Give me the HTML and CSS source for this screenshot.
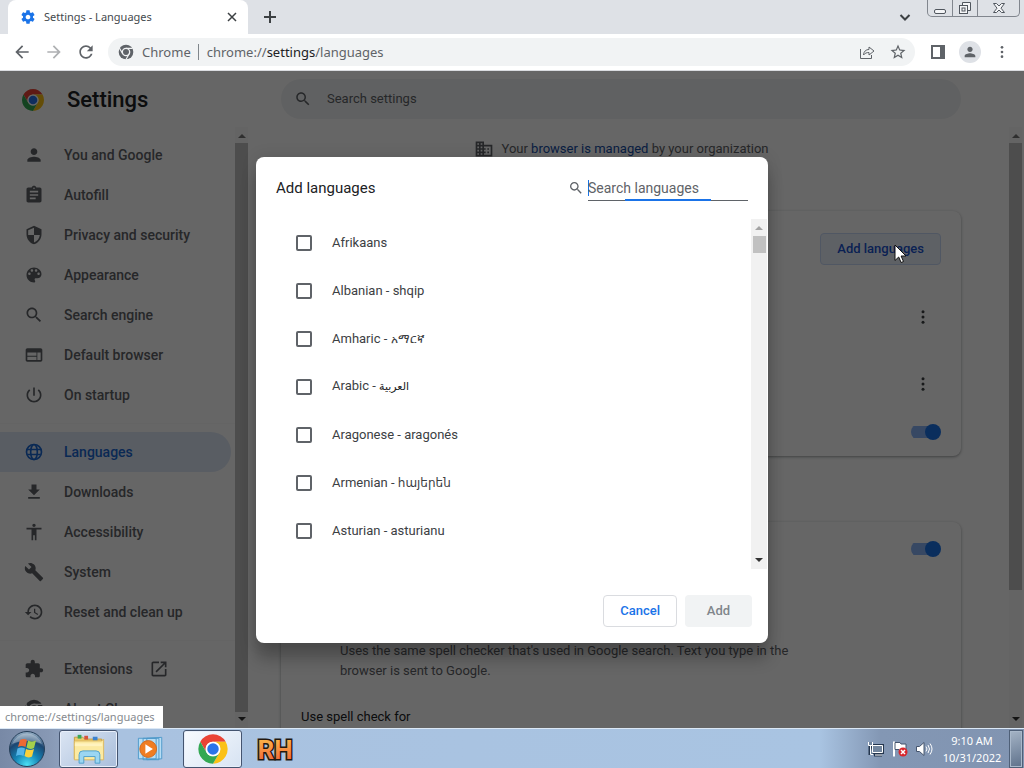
FILE: index.html
```html
<!DOCTYPE html>
<html lang="en">
<head>
<meta charset="utf-8">
<title>Settings - Languages</title>
<link rel="stylesheet" href="styles.css">
</head>
<body>
<svg class="defs" aria-hidden="true">
  <symbol id="chrome-logo" viewBox="0 0 48 48">
    <path fill="#ea4335" d="M4.95 13A22 22 0 0 1 43.05 13H24A11 11 0 0 0 14.47 29.5Z"/>
    <path fill="#fbc116" d="M43.05 13A22 22 0 0 1 24 46L33.53 29.5A11 11 0 0 0 24 13Z"/>
    <path fill="#34a853" d="M24 46A22 22 0 0 1 4.95 13L14.47 29.5A11 11 0 0 0 33.53 29.5Z"/>
    <circle cx="24" cy="24" r="11" fill="#fff"/><circle cx="24" cy="24" r="8.6" fill="#2a74ea"/>
  </symbol>
  <symbol id="search" viewBox="0 0 24 24"><path d="M15.5 14h-.79l-.28-.27C15.41 12.59 16 11.11 16 9.5 16 5.91 13.09 3 9.5 3S3 5.91 3 9.5 5.91 16 9.5 16c1.61 0 3.09-.59 4.23-1.57l.27.28v.79l5 4.99L20.49 19l-4.99-5zm-6 0C7.01 14 5 11.99 5 9.5S7.01 5 9.5 5 14 7.01 14 9.5 11.99 14 9.5 14z"/></symbol>
  <symbol id="person" viewBox="0 0 24 24"><path d="M12 12c2.21 0 4-1.79 4-4s-1.79-4-4-4-4 1.79-4 4 1.79 4 4 4zm0 2c-2.67 0-8 1.34-8 4v2h16v-2c0-2.66-5.33-4-8-4z"/></symbol>
  <symbol id="dots" viewBox="0 0 24 24"><circle cx="12" cy="5" r="2"/><circle cx="12" cy="12" r="2"/><circle cx="12" cy="19" r="2"/></symbol>
  <symbol id="up" viewBox="0 0 8 8"><path d="M0 6l4-4 4 4z"/></symbol>
  <symbol id="down" viewBox="0 0 8 8"><path d="M0 2l4 4 4-4z"/></symbol>
</svg>

<header class="tabstrip">
  <div class="tab">
    <svg class="i16 blue" viewBox="0 0 24 24"><path d="M19.43 12.98c.04-.32.07-.64.07-.98s-.03-.66-.07-.98l2.11-1.65c.19-.15.24-.42.12-.64l-2-3.46c-.12-.22-.39-.3-.61-.22l-2.49 1c-.52-.4-1.08-.73-1.69-.98l-.38-2.65C14.46 2.18 14.25 2 14 2h-4c-.25 0-.46.18-.49.42l-.38 2.65c-.61.25-1.17.59-1.69.98l-2.49-1c-.23-.09-.49 0-.61.22l-2 3.46c-.13.22-.07.49.12.64l2.11 1.65c-.04.32-.07.65-.07.98s.03.66.07.98l-2.11 1.65c-.19.15-.24.42-.12.64l2 3.46c.12.22.39.3.61.22l2.49-1c.52.4 1.08.73 1.69.98l.38 2.65c.03.24.24.42.49.42h4c.25 0 .46-.18.49-.42l.38-2.65c.61-.25 1.17-.59 1.69-.98l2.49 1c.23.09.49 0 .61-.22l2-3.46c.12-.22.07-.49-.12-.64l-2.11-1.65zM12 15.5c-1.93 0-3.5-1.57-3.5-3.5s1.57-3.5 3.5-3.5 3.5 1.57 3.5 3.5-1.57 3.5-3.5 3.5z"/></svg>
    <span class="tab-title">Settings - Languages</span>
    <button class="bare" aria-label="Close tab"><svg class="i10 line" viewBox="0 0 10 10"><path d="M1 1l8 8M9 1l-8 8"/></svg></button>
  </div>
  <button class="bare new-tab" aria-label="New tab"><svg class="i12 line" viewBox="0 0 12 12"><path d="M6 0v12M0 6h12"/></svg></button>
  <button class="bare tab-search" aria-label="Search tabs"><svg class="i12 line" viewBox="0 0 12 12"><path d="M1.500 4l4.500 4.500L10.500 4"/></svg></button>
  <div class="window-buttons">
    <button aria-label="Minimize"><svg viewBox="0 0 14 14"><rect x="1.500" y="8.500" width="11" height="4" rx="1.500"/></svg></button>
    <button aria-label="Restore"><svg viewBox="0 0 14 14"><path d="M4.500 4V1.500h8v8H10"/><rect x="1.500" y="4.500" width="8" height="8"/><rect x="4" y="7" width="3" height="3"/></svg></button>
    <button class="wide" aria-label="Close"><svg viewBox="0 0 14 14"><path d="M1.500 2.500h3L7 5l2.500-2.500h3L9 7.200l3.500 4.300h-3L7 9l-2.500 2.500h-3L5 7.200z"/></svg></button>
  </div>
</header>

<nav class="toolbar">
  <button class="bare" aria-label="Back"><svg class="i20" viewBox="0 0 24 24"><path d="M20 11H7.830l5.590-5.590L12 4l-8 8 8 8 1.410-1.410L7.830 13H20v-2z"/></svg></button>
  <button class="bare faded" aria-label="Forward"><svg class="i20" viewBox="0 0 24 24"><path d="M4 13h12.170l-5.590 5.590L12 20l8-8-8-8-1.410 1.410L16.170 11H4v2z"/></svg></button>
  <button class="bare" aria-label="Reload"><svg class="i20" viewBox="0 0 24 24"><path d="M17.650 6.350C16.200 4.900 14.210 4 12 4c-4.420 0-7.990 3.580-7.990 8s3.570 8 7.990 8c3.730 0 6.840-2.550 7.730-6h-2.080c-.82 2.330-3.040 4-5.650 4-3.310 0-6-2.690-6-6s2.690-6 6-6c1.660 0 3.140.69 4.220 1.780L13 11h7V4l-2.350 2.350z"/></svg></button>
  <div class="omnibox">
    <svg class="i16" viewBox="0 0 48 48"><circle cx="24" cy="24" r="22"/><circle cx="24" cy="24" r="11" fill="none" stroke="#f1f3f4" stroke-width="4"/><path fill="none" stroke="#f1f3f4" stroke-width="3.500" d="M24 13H44M14.470 29.500L4 12M33.530 29.500L23.500 47"/></svg>
    <span class="origin">Chrome</span>
    <span class="url">chrome://<b>settings</b>/languages</span>
    <button class="bare" aria-label="Share"><svg class="i16 outline" viewBox="0 0 16 16"><path d="M1.500 5v9.500h11V11M4.500 11c.3-3.800 2.500-5.500 5.500-5.500V3l5 4-5 4V8.500c-2.500 0-4 .7-5.500 2.500z"/></svg></button>
    <button class="bare" aria-label="Bookmark this tab"><svg class="i18" viewBox="0 0 24 24"><path d="M22 9.240l-7.190-.62L12 2 9.190 8.630 2 9.240l5.460 4.730L5.820 21 12 17.270 18.180 21l-1.630-7.030L22 9.240zM12 15.400l-3.760 2.270 1-4.280-3.320-2.880 4.380-.38L12 6.100l1.710 4.040 4.380.38-3.320 2.880 1 4.280L12 15.400z"/></svg></button>
  </div>
  <button class="bare side-panel" aria-label="Side panel"><svg class="i16" viewBox="0 0 16 16"><path fill-rule="evenodd" d="M1 1h14v14H1zM3 3v10h7V3z"/></svg></button>
  <button class="bare avatar" aria-label="Profile"><svg class="i16"><use href="#person"/></svg></button>
  <button class="bare" aria-label="Menu"><svg class="i16"><use href="#dots"/></svg></button>
</nav>

<div class="page">
  <div class="page-head">
    <div class="brand"><svg class="i24"><use href="#chrome-logo"/></svg><h1>Settings</h1></div>
    <div class="head-main">
      <label class="search-box"><svg class="i18"><use href="#search"/></svg><input type="text" placeholder="Search settings" aria-label="Search settings"></label>
    </div>
  </div>
  <div class="page-body">
    <aside class="sidebar">
      <nav class="menu">
        <a href="#"><svg><use href="#person"/></svg>You and Google</a>
        <a href="#"><svg viewBox="0 0 24 24"><path d="M19 3h-4.180C14.400 1.840 13.300 1 12 1c-1.300 0-2.400.84-2.820 2H5c-1.100 0-2 .9-2 2v14c0 1.100.9 2 2 2h14c1.100 0 2-.9 2-2V5c0-1.100-.9-2-2-2zm-7 0c.55 0 1 .45 1 1s-.45 1-1 1-1-.45-1-1 .45-1 1-1zm2 14H7v-2h7v2zm3-4H7v-2h10v2zm0-4H7V7h10v2z"/></svg>Autofill</a>
        <a href="#"><svg viewBox="0 0 24 24"><path d="M12 1L3 5v6c0 5.550 3.840 10.740 9 12 5.160-1.260 9-6.450 9-12V5l-9-4zm0 10.990h7c-.53 4.120-3.280 7.790-7 8.940V12H5V6.300l7-3.110v8.800z"/></svg>Privacy and security</a>
        <a href="#"><svg viewBox="0 0 24 24"><path d="M12 3c-4.970 0-9 4.030-9 9s4.030 9 9 9c.83 0 1.500-.67 1.500-1.500 0-.39-.15-.74-.39-1.010-.23-.26-.38-.61-.38-.99 0-.83.67-1.500 1.500-1.500H16c2.760 0 5-2.240 5-5 0-4.420-4.030-8-9-8zm-5.500 9c-.83 0-1.500-.67-1.500-1.500S5.670 9 6.500 9 8 9.670 8 10.500 7.330 12 6.500 12zm3-4C8.670 8 8 7.330 8 6.500S8.670 5 9.500 5s1.500.67 1.500 1.500S10.330 8 9.500 8zm5 0c-.83 0-1.500-.67-1.500-1.500S13.670 5 14.500 5s1.500.67 1.500 1.500S15.330 8 14.500 8zm3 4c-.83 0-1.500-.67-1.500-1.500S16.670 9 17.500 9s1.500.67 1.500 1.500-.67 1.500-1.500 1.500z"/></svg>Appearance</a>
        <a href="#"><svg><use href="#search"/></svg>Search engine</a>
        <a href="#"><svg viewBox="0 0 24 24"><path d="M20 4H4c-1.100 0-1.990.9-1.990 2L2 18c0 1.100.9 2 2 2h16c1.100 0 2-.9 2-2V6c0-1.100-.9-2-2-2zm-5 14H4v-4h11v4zm0-5H4V9h11v4zm5 5h-4V9h4v9z"/></svg>Default browser</a>
        <a href="#"><svg viewBox="0 0 24 24"><path d="M13 3h-2v10h2V3zm4.830 2.170l-1.420 1.420C17.990 7.860 19 9.810 19 12c0 3.870-3.130 7-7 7s-7-3.130-7-7c0-2.190 1.010-4.140 2.580-5.420L6.170 5.170C4.230 6.820 3 9.260 3 12c0 4.970 4.030 9 9 9s9-4.030 9-9c0-2.740-1.230-5.180-3.170-6.830z"/></svg>On startup</a>
        <hr>
        <a href="#" class="current" aria-current="page"><svg viewBox="0 0 24 24"><g fill="none" stroke="currentColor" stroke-width="2"><circle cx="12" cy="12" r="9"/><ellipse cx="12" cy="12" rx="4" ry="9"/><path d="M4 9h16M4 15h16"/></g></svg>Languages</a>
        <a href="#"><svg viewBox="0 0 24 24"><path d="M19 9h-4V3H9v6H5l7 7 7-7zM5 18v2h14v-2H5z"/></svg>Downloads</a>
        <a href="#"><svg viewBox="0 0 24 24"><path d="M12 2c1.100 0 2 .9 2 2s-.9 2-2 2-2-.9-2-2 .9-2 2-2zm9 7h-6v13h-2v-6h-2v6H9V9H3V7h18v2z"/></svg>Accessibility</a>
        <a href="#"><svg viewBox="0 0 24 24"><path d="M22.700 19l-9.100-9.100c.9-2.300.4-5-1.500-6.900-2-2-5-2.400-7.400-1.300L9 6 6 9 1.600 4.700C.4 7.100.9 10.100 2.900 12.100c1.900 1.900 4.600 2.400 6.900 1.500l9.100 9.100c.4.4 1 .4 1.400 0l2.300-2.300c.5-.4.5-1.100.1-1.400z"/></svg>System</a>
        <a href="#"><svg viewBox="0 0 24 24"><path d="M13 3c-4.970 0-9 4.030-9 9H1l3.890 3.890.07.14L9 12H6c0-3.870 3.130-7 7-7s7 3.130 7 7-3.130 7-7 7c-1.930 0-3.680-.79-4.940-2.060l-1.420 1.420C8.270 19.990 10.510 21 13 21c4.970 0 9-4.030 9-9s-4.030-9-9-9zm-1 5v5l4.280 2.540.72-1.210-3.500-2.080V8H12z"/></svg>Reset and clean up</a>
        <hr>
        <a href="#"><svg viewBox="0 0 24 24"><path d="M20.500 11H19V7c0-1.100-.9-2-2-2h-4V3.500C13 2.120 11.880 1 10.500 1S8 2.120 8 3.500V5H4c-1.100 0-1.990.9-1.990 2v3.800H3.500c1.490 0 2.700 1.210 2.700 2.700s-1.210 2.700-2.700 2.700H2V20c0 1.100.9 2 2 2h3.800v-1.500c0-1.490 1.210-2.700 2.700-2.700 1.490 0 2.700 1.210 2.700 2.700V22H17c1.100 0 2-.9 2-2v-4h1.500c1.380 0 2.500-1.120 2.500-2.500S21.880 11 20.500 11z"/></svg>Extensions<svg viewBox="0 0 24 24"><path d="M19 19H5V5h7V3H5c-1.110 0-2 .9-2 2v14c0 1.100.89 2 2 2h14c1.100 0 2-.9 2-2v-7h-2v7zM14 3v2h3.590l-9.830 9.830 1.410 1.410L19 6.410V10h2V3h-7z"/></svg></a>
        <a href="#"><svg viewBox="0 0 48 48"><circle cx="24" cy="24" r="22"/><circle cx="24" cy="24" r="11" fill="none" stroke="#fff" stroke-width="4"/><path stroke="#fff" stroke-width="3" d="M24 13H44M14.470 29.500L4 12M33.530 29.500L23.500 47"/></svg>About Chrome</a>
      </nav>
      <div class="scrollbar"><svg><use href="#up"/></svg><i class="thumb full"></i><svg class="dark"><use href="#down"/></svg></div>
    </aside>
    <main class="content">
      <p class="managed"><svg class="i20" viewBox="0 0 24 24"><path d="M12 7V3H2v18h20V7H12zM6 19H4v-2h2v2zm0-4H4v-2h2v2zm0-4H4V9h2v2zm0-4H4V5h2v2zm4 12H8v-2h2v2zm0-4H8v-2h2v2zm0-4H8V9h2v2zm0-4H8V5h2v2zm10 12h-8v-2h2v-2h-2v-2h2v-2h-2V9h8v10zm-2-8h-2v2h2v-2zm0 4h-2v2h2v-2z"/></svg><span>Your <a href="#">browser is managed</a> by your organization</span></p>
      <section class="card" aria-label="Preferred languages">
        <div class="row row-add"><button class="outlined">Add languages</button></div>
        <div class="row row-lang"><button class="bare" aria-label="More actions"><svg class="i18"><use href="#dots"/></svg></button></div>
        <div class="row row-lang"><button class="bare" aria-label="More actions"><svg class="i18"><use href="#dots"/></svg></button></div>
        <div class="row row-last"><input class="toggle" type="checkbox" checked aria-label="Offer to translate pages"></div>
      </section>
      <section class="card spell" aria-label="Spell check">
        <div class="row row-spell"><input class="toggle" type="checkbox" checked aria-label="Check for spelling errors"></div>
        <p class="note">Uses the same spell checker that's used in Google search. Text you type in the browser is sent to Google.</p>
        <h2>Use spell check for</h2>
      </section>
    </main>
    <div class="scrollbar edge"><svg><use href="#up"/></svg><i class="thumb"></i><svg class="dark"><use href="#down"/></svg></div>
  </div>

  <div class="scrim">
    <div class="dialog" role="dialog" aria-labelledby="dialog-title">
      <div class="dialog-head">
        <h2 id="dialog-title">Add languages</h2>
        <svg class="i16"><use href="#search"/></svg>
        <input type="text" placeholder="Search languages" aria-label="Search languages">
      </div>
      <div class="dialog-body">
        <div class="list">
          <label><input type="checkbox">Afrikaans</label>
          <label><input type="checkbox">Albanian - shqip</label>
          <label><input type="checkbox"><span>Amharic - <span class="ethiopic">አማርኛ</span></span></label>
          <label><input type="checkbox"><span>Arabic - <span class="arabic">العربية</span></span></label>
          <label><input type="checkbox">Aragonese - aragonés</label>
          <label><input type="checkbox"><span>Armenian - <span class="armenian">հայերեն</span></span></label>
          <label><input type="checkbox">Asturian - asturianu</label>
        </div>
        <div class="scrollbar light"><svg><use href="#up"/></svg><i class="thumb short"></i><svg class="dark"><use href="#down"/></svg></div>
      </div>
      <div class="dialog-foot"><button class="outlined">Cancel</button><button class="disabled" disabled>Add</button></div>
    </div>
  </div>
  <svg class="cursor" viewBox="0 0 13 20"><path d="M1 1v15.500l3.700-3.500 2.400 5.500 2.400-1-2.400-5.500H12z" fill="#fff" stroke="#111"/></svg>
  <div class="status">chrome://settings/languages</div>
</div>

<footer class="taskbar">
  <button class="bare start" aria-label="Start"><svg viewBox="0 0 38 38">
    <defs><radialGradient id="orb" cx=".5" cy=".95" r=".9"><stop offset="0" stop-color="#4be0f4"/><stop offset=".4" stop-color="#1584b5"/><stop offset=".75" stop-color="#1c4671"/><stop offset="1" stop-color="#8aa5bd"/></radialGradient></defs>
    <circle cx="19" cy="19" r="17.500" fill="url(#orb)" stroke="#263f59"/>
    <path d="M4 14a16 16 0 0 1 30 0c-8-4-22-4-30 0z" fill="#fff" opacity=".3"/>
    <path fill="#ee6934" d="M12 10q4-2 7 0l-1.500 7q-4-2-7.500 0z"/><path fill="#a5cf4c" d="M20 10.500q4 2 8 0L26 18q-4 2-7.500-.5z"/>
    <path fill="#56b5e8" d="M9.500 18.500q4-2 7.500 0L15.500 26q-4-2-7.500 0z"/><path fill="#fbd13b" d="M18 19q4 2 8 0l-2 7.500q-4 2-7.500-.5z"/></svg></button>
  <button class="task" aria-label="File Explorer"><svg viewBox="0 0 36 32">
    <path fill="#eccb6c" stroke="#c49b43" d="M2.500 3.500h9l2 2h18v21h-29z"/><path fill="#3aa757" d="M6 1h4v4H6z"/><path fill="#d6533c" d="M13 2h4v4h-4z"/><path fill="#3b82d0" d="M22 3h5v4h-5z"/>
    <path fill="#fbeaa2" stroke="#dcb85e" d="M2.500 7.500h29l2-2v22h-31z"/><path fill="#fff3bf" d="M3 10h29v3H3z"/><path fill="#9bd6f2" stroke="#4c9ecb" d="M7.500 31v-9q0-4 4-4h14q4 0 4 4v9h-5v-7h-12v7z"/></svg></button>
  <button class="task plain" aria-label="Media Player"><svg viewBox="0 0 30 28">
    <path fill="#b7ddf4" stroke="#4c98c9" d="M10.500 2.500l16-1v23l-16 1zM6.500 2.500h17v23h-17zM1.500 2.500h19v22h-19z"/><circle cx="12" cy="14" r="9" fill="#f07d22" stroke="#cf6a20"/><path d="M9 9l8 5-8 5z" fill="#fff"/></svg></button>
  <button class="task active" aria-label="Google Chrome"><svg><use href="#chrome-logo"/></svg></button>
  <button class="task plain" aria-label="RH"><svg class="rh" viewBox="0 0 42 32">
    <defs><linearGradient id="flame" x2="0" y2="1"><stop offset="0" stop-color="#ffc24a"/><stop offset="1" stop-color="#ee5a38"/></linearGradient></defs>
    <text x="21" y="26" text-anchor="middle">RH</text></svg></button>
  <div class="tray">
    <svg viewBox="0 0 18 18"><g fill="none" stroke="#24364e" stroke-width="3"><path d="M5.500 5.500h10v7h-10zM7 15h8M3 2v13"/></g><g fill="#72869e" stroke="#fff"><path d="M5.500 5.500h10v7h-10zM8 15h7M3.500 6v8.500H6M1.500 2v3.500h4V2"/></g></svg>
    <svg viewBox="0 0 18 18"><path d="M3 1.500v15" stroke="#fff" stroke-width="2"/><path d="M4 2.500h5l1 1.500h5v7H9L8 9.500H4z" fill="#fff" stroke="#44546d"/><circle cx="12" cy="12" r="4.500" fill="#d8272d"/><path d="M10 10l4 4M14 10l-4 4" stroke="#fff" stroke-width="1.500"/></svg>
    <svg viewBox="0 0 18 18"><path d="M1.500 6.500h3L9 2.500v13l-4.500-4h-3z" fill="#fff" stroke="#44546d"/><path d="M11 6.500q2 2.500 0 5M13 5q3 4 0 8M15 3.500q4 5.500 0 11" fill="none" stroke="#fff"/></svg>
  </div>
  <div class="clock"><time>9:10 AM</time><time>10/31/2022</time></div>
  <button class="bare show-desktop" aria-label="Show desktop"></button>
</footer>
</body>
</html>
```
FILE: styles.css
```css
* { box-sizing: border-box; }
body { margin: 0; height: 100vh; display: flex; flex-direction: column; overflow: hidden; font: 13px/20px Roboto, sans-serif; color: #202124; background: #fff; }
h1, h2, p { margin: 0; font-weight: 400; }
svg { flex: none; fill: currentColor; display: block; }
button, input { font: inherit; }
.defs { position: absolute; width: 0; height: 0; }
.bare { border: 0; background: none; padding: 0; color: inherit; display: flex; align-items: center; justify-content: center; }
.i10 { width: 10px; height: 10px; }
.i12 { width: 12px; height: 12px; }
.i16 { width: 16px; height: 16px; }
.i18 { width: 18px; height: 18px; }
.i20 { width: 20px; height: 20px; }
.i24 { width: 24px; height: 24px; }
.line { fill: none; stroke: #3c4043; stroke-width: 2; }
.tab .line { stroke-width: 1.5; }
.outline { fill: none; stroke: currentColor; }
.blue { color: #1a73e8; }

/* Browser frame */
.tabstrip { height: 34px; flex: none; display: flex; align-items: center; background: #dee1e6; }
.tab { width: 240px; height: 34px; margin-left: 8px; padding: 0 11px 0 12px; display: flex; align-items: center; gap: 8px; background: #fff; border-radius: 8px 8px 0 0; font: 11px/16px "Noto Sans", sans-serif; color: #45494d; }
.tab-title { flex: 1; }
.new-tab { margin-left: 16px; }
.tab-search { margin-left: auto; }
.window-buttons { display: flex; align-self: flex-start; height: 17px; margin: 0 4px 0 16px; border: 1px solid #81868e; border-top: 0; border-radius: 0 0 5px 5px; }
.window-buttons button { width: 25px; padding: 0; border: 0; border-right: 1px solid #81868e; background: none; display: flex; align-items: center; justify-content: center; }
.window-buttons .wide { width: 41px; border-right: 0; }
.window-buttons svg { width: 14px; height: 14px; fill: #f4f5f7; stroke: #50565e; }
.toolbar { height: 37px; flex: none; display: flex; align-items: center; gap: 12px; padding: 0 14px 0 12px; border-bottom: 1px solid #dadce0; color: #5f6368; font: 13px/20px "Noto Sans", sans-serif; }
.faded { opacity: .5; }
.omnibox { flex: 1; height: 28px; border-radius: 14px; background: #f1f3f4; display: flex; align-items: center; padding: 0 8px 0 10px; gap: 14px; }
.origin { padding-right: 7px; border-right: 1px solid #80868b; margin: 0 -6px; line-height: 16px; }
.url { flex: 1; }
.url b { font-weight: 400; color: #202124; }
.side-panel { margin-left: 3px; }
.avatar { width: 22px; height: 22px; border-radius: 50%; background: #dee1e6; margin: 0 1px; }

/* Settings page */
.page { flex: 1; min-height: 0; position: relative; overflow: hidden; display: flex; flex-direction: column; }
.page-head { height: 56px; flex: none; display: flex; align-items: center; }
.brand { width: 248px; display: flex; align-items: center; gap: 22px; padding: 2px 0 0 21px; }
.brand h1 { font-size: 22px; line-height: 28px; font-weight: 500; }
.head-main { flex: 1; padding: 0 63px 0 33px; }
.search-box { display: flex; align-items: center; gap: 15px; height: 40px; padding: 0 13px; border-radius: 20px; background: #f1f3f4; color: #5f6368; }
.search-box input { flex: 1; border: 0; background: none; outline: 0; padding: 0; }
input::placeholder { color: #5f6368; opacity: 1; }
.page-body { flex: 1; min-height: 0; display: flex; }
.sidebar { width: 248px; flex: none; display: flex; }
.menu { flex: 1; overflow: hidden; padding-top: 8px; }
.menu a { height: 40px; margin-right: 4px; padding-left: 24px; display: flex; align-items: center; gap: 16px; color: #5f6368; font-weight: 500; font-size: 14px; text-decoration: none; }
.menu svg { width: 20px; height: 20px; }
.menu svg:first-child { margin-right: 4px; }
.menu hr { margin: 8px 0; border: 0; height: 1px; background: #fafafa; }
.menu .current { color: #1967d2; background: #dfe9f8; border-radius: 0 20px 20px 0; }
.scrollbar { width: 13px; flex: none; display: flex; flex-direction: column; align-items: center; justify-content: space-between; background: #f9f9f9; padding: 5px 0; color: #777; }
.scrollbar svg { width: 8px; height: 8px; }
.scrollbar .dark { color: #333; }
.thumb { width: 13px; height: 447px; margin: 3px 0 auto; background: #c1c1c1; }
.thumb.full { height: auto; flex: 1; margin: 3px 0; }
.edge { margin-right: 2px; }
.content { flex: 1; overflow: hidden; padding: 12px 48px 0 33px; display: flex; flex-direction: column; }
.managed { display: flex; justify-content: center; align-items: center; gap: 8px; color: #5f6368; }
.managed a { color: #174ea6; text-decoration: none; }
.card { margin-top: 52px; flex: none; border-radius: 8px; background: #fff; box-shadow: 0 1px 2px rgba(60,64,67,.3), 0 1px 3px 1px rgba(60,64,67,.15); padding: 0 20px; }
.spell { margin-top: 66px; height: 260px; }
.row { display: flex; justify-content: flex-end; align-items: center; color: #3c4043; }
.row-add { height: 72px; padding-top: 4px; }
.row-lang { height: 67px; padding-right: 9px; }
.row-last { height: 39px; padding-bottom: 9px; }
.row-spell { height: 54px; }
.note { color: #5f6368; padding: 65px 130px 0 39px; }
.spell h2 { font-size: 13px; padding-top: 26px; }
.outlined { height: 32px; padding: 0 16px; border: 1px solid #dadce0; border-radius: 4px; background: #fff; color: #1a73e8; font-weight: 500; }
.row-add .outlined { background: #ebf2fd; border-color: #c8daf8; color: #1a52d0; }
.toggle { appearance: none; margin: 0; width: 30px; height: 16px; display: flex; align-items: center; justify-content: flex-end; background: linear-gradient(#8ab4f8, #8ab4f8) 0 2px / 24px 12px no-repeat; border-radius: 8px; }
.toggle::before { content: ""; width: 16px; height: 16px; border-radius: 50%; background: #1a73e8; }

/* Dialog */
.scrim { position: absolute; inset: 0; display: flex; align-items: center; justify-content: center; background: rgba(0,0,0,.6); }
.dialog { width: 512px; background: #fff; border-radius: 8px; overflow: hidden; box-shadow: 0 0 16px rgba(0,0,0,.12), 0 16px 16px rgba(0,0,0,.24); }
.dialog-head { height: 62px; padding: 0 20px; display: flex; align-items: center; gap: 4px; color: #5f6368; }
.dialog-head h2 { flex: 1; font-size: 15px; color: #202124; }
.dialog-head input { width: 160px; height: 26px; border: 0; outline: 0; padding: 1px 0 0; font-size: 14px; background: linear-gradient(#1a73e8, #1a73e8) 0 5px / 1px 16px no-repeat, linear-gradient(#1a73e8, #1a73e8) 37px 100% / 86px 2px no-repeat, linear-gradient(#5f6368, #5f6368) 0 100% / 100% 1px no-repeat; }
.dialog-body { height: 350px; display: flex; padding-right: 1px; }
.list { flex: 1; overflow: hidden; }
.list label { height: 48px; padding-left: 40px; display: flex; align-items: center; gap: 20px; color: #3c4043; }
.list input { appearance: none; width: 16px; height: 16px; margin: 0; border: 2px solid #5f6368; border-radius: 2px; }
.armenian { font-family: "DejaVu Sans", sans-serif; font-size: 12px; }
.arabic { font-family: "DejaVu Sans", sans-serif; font-size: 11px; color: #202124; }
.ethiopic { font-family: "Noto Sans", sans-serif; font-size: 12px; }
.light { width: 16px; background: #f1f1f1; color: #a3a3a3; }
.thumb.short { height: 17px; margin-top: 4px; }
.dialog-foot { padding: 26px 16px 16px; display: flex; justify-content: flex-end; gap: 8px; }
.disabled { height: 32px; width: 67px; border: 0; border-radius: 4px; background: #f1f3f4; color: #80868b; font-weight: 500; }
.cursor { position: absolute; left: 894px; top: 173px; width: 13px; height: 20px; }
.status { position: absolute; left: 0; bottom: 0; height: 22px; padding: 2px 8px 0 5px; background: #fff; color: #85898e; font: 11px/18px "Noto Sans", sans-serif; }

/* Taskbar */
.taskbar { height: 40px; flex: none; display: flex; align-items: center; padding: 1px 1px 0 8px; border-top: 1px solid #dbe8f6; color: #fff; font: 11px/17px "Noto Sans", sans-serif; background: linear-gradient(90deg, #7889a6, #8798b4 48px, #a9c2e0 120px, #a9c4e2 80%, #8397b4 86%, #8194b1); }
.start svg { width: 38px; height: 38px; }
.task { width: 59px; height: 38px; margin-left: 3px; padding: 0; display: flex; align-items: center; justify-content: center; border: 1px solid #44546f; border-radius: 3px; box-shadow: inset 0 0 0 1px #e8effa; background: linear-gradient(135deg, #dbe5f3, #a9bedb); }
.start + .task { margin-left: 13px; }
.task svg { width: 34px; height: 32px; }
.plain { border-color: transparent; box-shadow: none; background: none; }
.active { background: linear-gradient(135deg, #f8fbff, #d7e3f2); }
.plain svg { width: 28px; height: 28px; }
.task .rh { width: 42px; height: 32px; }
.rh text { font: bold 26px Roboto, sans-serif; fill: url(#flame); stroke: #24180f; stroke-width: 3; paint-order: stroke; }
.tray { margin-left: auto; display: flex; gap: 6px; }
.tray svg { width: 18px; height: 18px; }
.clock { width: 76px; padding-left: 2px; display: flex; flex-direction: column; align-items: center; }
.show-desktop { width: 14px; height: 38px; border: 1px solid #4f6078; box-shadow: inset 0 0 0 1px #a9b8ca; background: linear-gradient(160deg, #a5b4c6, #5e718b); }
```
